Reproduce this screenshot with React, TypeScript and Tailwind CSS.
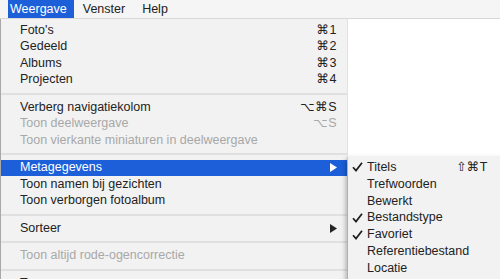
type Item =
  | { kind: 'sep' }
  | { kind: 'item'; label: string; shortcut?: string; disabled?: boolean; active?: boolean; submenu?: boolean }

const mainItems: Item[] = [
  { kind: 'item', label: "Foto's", shortcut: '⌘1' },
  { kind: 'item', label: 'Gedeeld', shortcut: '⌘2' },
  { kind: 'item', label: 'Albums', shortcut: '⌘3' },
  { kind: 'item', label: 'Projecten', shortcut: '⌘4' },
  { kind: 'sep' },
  { kind: 'item', label: 'Verberg navigatiekolom', shortcut: '⌥⌘S' },
  { kind: 'item', label: 'Toon deelweergave', shortcut: '⌥S', disabled: true },
  { kind: 'item', label: 'Toon vierkante miniaturen in deelweergave', disabled: true },
  { kind: 'sep' },
  { kind: 'item', label: 'Metagegevens', active: true, submenu: true },
  { kind: 'item', label: 'Toon namen bij gezichten' },
  { kind: 'item', label: 'Toon verborgen fotoalbum' },
  { kind: 'sep' },
  { kind: 'item', label: 'Sorteer', submenu: true },
  { kind: 'sep' },
  { kind: 'item', label: 'Toon altijd rode-ogencorrectie', disabled: true },
  { kind: 'sep' },
  { kind: 'item', label: 'Toon' },
]

const subItems = [
  { label: 'Titels', checked: true, shortcut: '⇧⌘T' },
  { label: 'Trefwoorden' },
  { label: 'Bewerkt' },
  { label: 'Bestandstype', checked: true },
  { label: 'Favoriet', checked: true },
  { label: 'Referentiebestand' },
  { label: 'Locatie' },
]

function Arrow({ white }: { white?: boolean }) {
  return (
    <svg width="7" height="9" viewBox="0 0 7 9" className={white ? 'fill-white' : 'fill-[#262626]'}>
      <path d="M0 0 L7 4.5 L0 9 Z" />
    </svg>
  )
}

function Check() {
  return (
    <svg width="11" height="10" viewBox="0 0 11 10" className="stroke-[#1d1d1d]" fill="none">
      <path d="M1 5.2 L4 8.6 L10 0.8" strokeWidth="1.7" />
    </svg>
  )
}

export default function App() {
  return (
    <div
      className="relative w-[500px] h-[279px] overflow-hidden bg-white text-[12.5px] text-[#222]"
      style={{ fontFamily: '"Liberation Sans", "DejaVu Sans", sans-serif' }}
    >
      <div className="flex h-[19px] items-stretch bg-[#f5f5f5] border-b border-[#d8d8d8]">
        <div className="ml-[8px] flex h-[18px] items-center bg-[#1d5fd8] pl-[2px] pr-[7px] text-white">Weergave</div>
        <div className="flex h-[18px] items-center px-[9px]">Venster</div>
        <div className="flex h-[18px] items-center px-[8px]">Help</div>
      </div>

      <div className="w-[348px] border-l border-[#a8a8a8] border-r border-r-[#e2e2e2] bg-[#f2f2f2] pt-[3px]">
        {mainItems.map((it, i) =>
          it.kind === 'sep' ? (
            <div key={i} className="flex h-[11px] items-center">
              <div className="h-[2px] w-full bg-[#e0e0e0]" />
            </div>
          ) : (
            <div
              key={i}
              className={
                'flex h-[16.5px] items-center justify-between pl-[19px] pr-[10px] ' +
                (it.active ? 'bg-[#1d5fd8] text-white ' : '') +
                (it.disabled ? 'text-[#a8a8a8]' : '')
              }
            >
              <span>{it.label}</span>
              {it.shortcut && <span className="tracking-[0.5px]">{it.shortcut}</span>}
              {it.submenu && <Arrow white={it.active} />}
            </div>
          )
        )}
      </div>

      <div className="absolute left-[348px] top-[157px] w-[170px] bg-[#f2f2f2] pt-[2px] pb-[6px] shadow-[-2px_2px_5px_rgba(0,0,0,0.3)]">
        {subItems.map((s) => (
          <div key={s.label} className="flex h-[16.8px] items-center pr-[30px]">
            <span className="flex w-[19px] justify-end pr-[4px]">{s.checked && <Check />}</span>
            <span className="flex-1">{s.label}</span>
            {s.shortcut && <span className="tracking-[0.5px]">{s.shortcut}</span>}
          </div>
        ))}
      </div>
    </div>
  )
}
